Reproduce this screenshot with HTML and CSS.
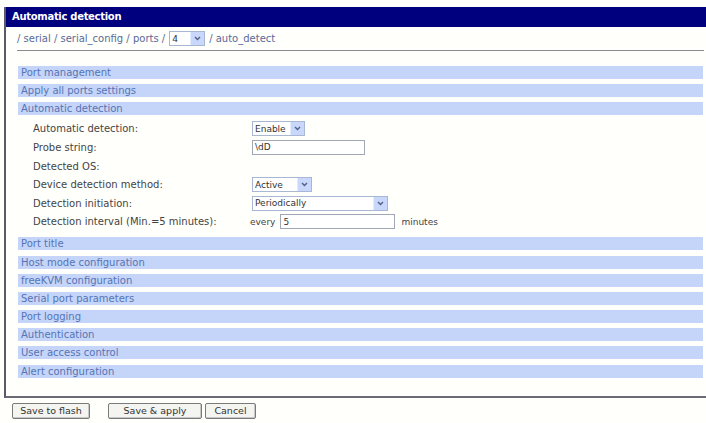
FILE: index.html
```html
<!DOCTYPE html>
<html>
<head>
<meta charset="utf-8">
<link rel="stylesheet" href="styles.css">
</head>
<body>
<div class="panel">
  <div class="title">Automatic detection</div>
  <div class="crumb">
    <span class="path">/ serial / serial_config / ports /</span>
    <span class="sel sel-port"><span class="val">4</span><span class="arr"><svg width="7" height="5" viewBox="0 0 7 5"><path d="M1 1 L3.5 3.5 L6 1" fill="none" stroke="#4d6185" stroke-width="1.4"/></svg></span></span>
    <span class="path">/ auto_detect</span>
  </div>
  <div class="sections">
    <div class="bar">Port management</div>
    <div class="bar">Apply all ports settings</div>
    <div class="bar">Automatic detection</div>
    <div class="form">
      <div class="row"><span class="lbl">Automatic detection:</span>
        <span class="sel w-enable"><span class="val">Enable</span><span class="arr"><svg width="7" height="5" viewBox="0 0 7 5"><path d="M1 1 L3.5 3.5 L6 1" fill="none" stroke="#4d6185" stroke-width="1.4"/></svg></span></span></div>
      <div class="row"><span class="lbl">Probe string:</span><span class="inp w-probe">\dD</span></div>
      <div class="row"><span class="lbl">Detected OS:</span></div>
      <div class="row"><span class="lbl">Device detection method:</span>
        <span class="sel w-active"><span class="val">Active</span><span class="arr"><svg width="7" height="5" viewBox="0 0 7 5"><path d="M1 1 L3.5 3.5 L6 1" fill="none" stroke="#4d6185" stroke-width="1.4"/></svg></span></span></div>
      <div class="row"><span class="lbl">Detection initiation:</span>
        <span class="sel w-period"><span class="val">Periodically</span><span class="arr"><svg width="7" height="5" viewBox="0 0 7 5"><path d="M1 1 L3.5 3.5 L6 1" fill="none" stroke="#4d6185" stroke-width="1.4"/></svg></span></span></div>
      <div class="row"><span class="lbl">Detection interval (Min.=5 minutes):</span>
        <span class="every">every</span><span class="inp w-every">5</span><span class="minutes">minutes</span></div>
    </div>
    <div class="bar">Port title</div>
    <div class="bar">Host mode configuration</div>
    <div class="bar">freeKVM configuration</div>
    <div class="bar">Serial port parameters</div>
    <div class="bar">Port logging</div>
    <div class="bar">Authentication</div>
    <div class="bar">User access control</div>
    <div class="bar">Alert configuration</div>
  </div>
</div>
<div class="buttons">
  <span class="btn b-flash">Save to flash</span>
  <span class="btn b-apply">Save &amp; apply</span>
  <span class="btn b-cancel">Cancel</span>
</div>
</body>
</html>
```
FILE: styles.css
```css
html, body { margin: 0; padding: 0; background: #fffffc; overflow: hidden; }
body { font-family: "DejaVu Sans", Tahoma, sans-serif; font-size: 10px; color: #444; width: 706px; height: 423px; }
.panel { margin: 7px 0 0 4px; width: 702px; border-left: 2px solid #5a5a6a; border-bottom: 2px solid #6a6a74; padding-bottom: 18px; box-sizing: border-box; }
.title { background: #00007f; color: #fff; font-weight: bold; height: 20px; line-height: 20px; padding-left: 6px; font-size: 10px; letter-spacing: -0.3px; }
.crumb { margin: 0 2px 0 11px; height: 23px; border-bottom: 1px solid #8a8a90; display: flex; align-items: center; gap: 4px; color: #5a6a9a; }
.path { white-space: nowrap; }
.sections { margin: 15px 3px 0 12px; display: flex; flex-direction: column; gap: 5.2px; }
.bar { background: #c5d5f9; height: 13px; line-height: 13px; padding-left: 3px; color: #5574b4; white-space: nowrap; }
.form { display: flex; flex-direction: column; margin: -1px 0 1px; }
.row { height: 18.6px; display: flex; align-items: center; }
.lbl { width: 217px; padding-left: 15px; flex: none; color: #444; white-space: nowrap; }
.sel { display: inline-flex; align-items: center; height: 15px; box-sizing: border-box; border: 1px solid #a9b8d2; background: #fff; justify-content: space-between; padding-left: 2px; color: #333; font-size: 9px; }
.sel .arr { width: 13px; height: 13px; background: #c8d7fb; display: flex; align-items: center; justify-content: center; border-left: 1px solid #e4ecff; }
.sel-port { width: 36px; }
.w-enable { width: 53px; margin-left: 2px; }
.w-active { width: 60px; margin-left: 2px; }
.w-period { width: 136px; margin-left: 2px; }
.inp { display: inline-flex; align-items: center; height: 15px; box-sizing: border-box; border: 1px solid #a0a8b8; background: #fff; padding-left: 2px; color: #333; font-size: 9px; }
.w-probe { width: 113px; margin-left: 2px; }
.every { margin-left: 0; font-size: 9px; }
.w-every { width: 115px; margin-left: 5px; }
.minutes { margin-left: 6px; font-size: 9px; }
.buttons { display: flex; margin: 5px 0 0 12px; }
.btn { display: inline-flex; align-items: center; justify-content: center; height: 16px; box-sizing: border-box; border: 1px solid #7a7a7a; border-radius: 2px; background: #f4f4f0; color: #333; font-size: 9.5px; box-shadow: inset -1px -1px 0 #c8c8c8; }
.b-flash { width: 78px; }
.b-apply { width: 94px; margin-left: 18px; }
.b-cancel { width: 51px; margin-left: 3px; }
```
